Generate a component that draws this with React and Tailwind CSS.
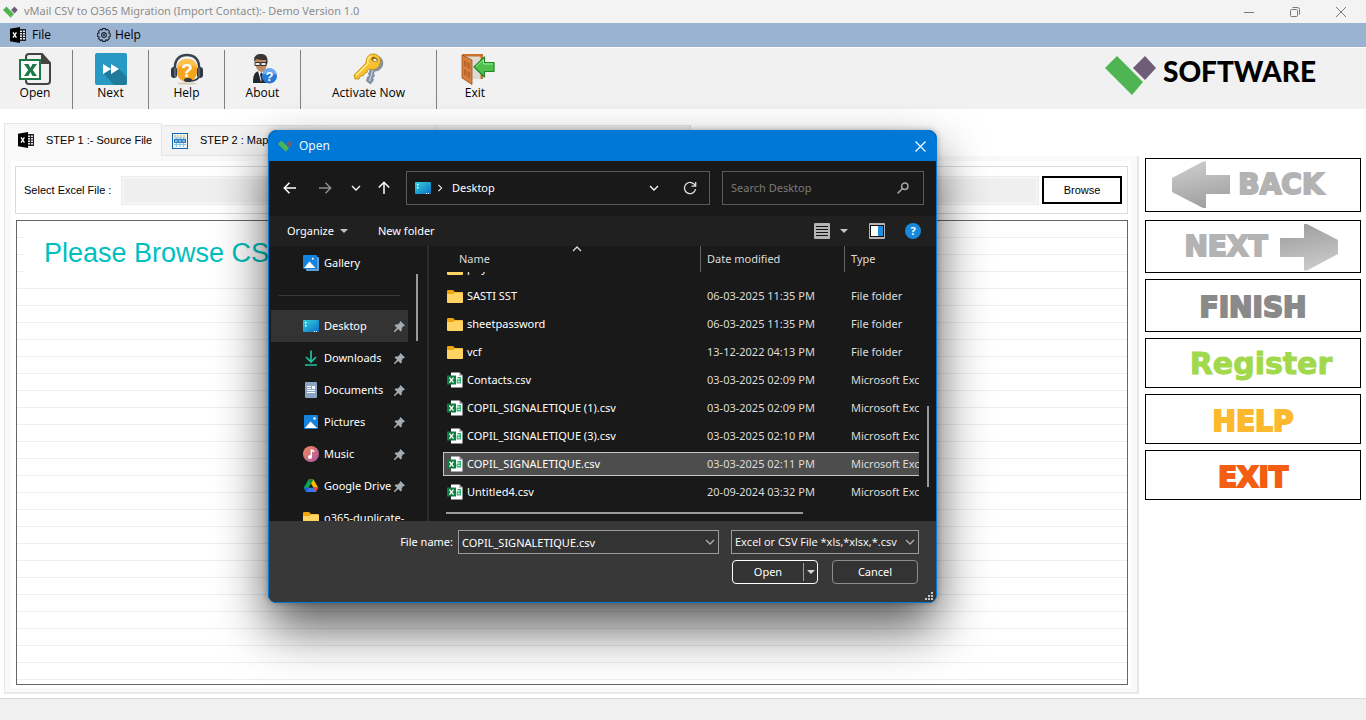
import React, { useState } from 'react';

const Logo = ({ className }) => (
  <svg className={className} viewBox="0 0 52 40" aria-hidden="true">
    <polygon points="12,1 0,13 27,40 38,27" fill="#4fb552" />
    <polygon points="40,1 51,13 40,25 28,13" fill="#6d5d76" />
  </svg>
);

const SheetIcon = ({ className }) => (
  <svg className={className} viewBox="0 0 16 16" aria-hidden="true">
    <rect x="8" y="2" width="8" height="12" fill="#222" />
    <path d="M9 3.5h3v1.6H9zM13 3.5h2v1.6h-2zM9 6.1h3v1.4H9zM13 6.1h2v1.4h-2zM9 8.5h3v1.4H9zM13 8.5h2v1.4h-2zM9 10.9h3v1.6H9zM13 10.9h2v1.6h-2z" fill="#dfe6ee" />
    <path d="M0 1.8 10 0v16L0 14.2z" fill="#000" />
    <path d="M3 5.4l3.4 5.2M6.4 5.4L3 10.6" stroke="#fff" strokeWidth="1.3" />
  </svg>
);

const GearIcon = () => (
  <svg className="size-3.5" viewBox="0 0 14 14" fill="none" stroke="#1d2733" strokeWidth="1.1" aria-hidden="true">
    <path d="M5.600.6h2.800l.5 1.500 1.500-.7 2 2-.7 1.500 1.500.600v2.900l-1.500.6.7 1.500-2 2-1.500-.7-.5 1.600H5.600L5 11.800l-1.500.7-2-2L2.200 9 .6 8.400V5.500L2.200 4.900l-.7-1.500 2-2L5 2.100z" />
    <circle cx="7" cy="7" r="2.400" />
    <circle cx="7" cy="7" r=".5" />
  </svg>
);

const OpenIcon = () => (
  <svg className="size-8" viewBox="0 0 32 32" aria-hidden="true">
    <path d="M10 1h13l8 9v18a3 3 0 0 1-3 3H10a3 3 0 0 1-3-3V4a3 3 0 0 1 3-3z" fill="#f1f1f1" stroke="#45443f" strokeWidth="2" />
    <path d="M22 0l10 11H22z" fill="#45443f" />
    <rect x="1" y="7" width="20" height="19" fill="#fff" stroke="#1b7a46" strokeWidth="2" />
    <path d="M5 11h4.500l2 4 2-4H18l-4.300 6 4.300 6h-4.500l-2-4-2.200 4H5l4.200-6z" fill="#1b7a46" />
  </svg>
);

const NextIcon = () => (
  <svg className="size-8" viewBox="0 0 32 32" aria-hidden="true">
    <rect width="32" height="32" rx="2" fill="#2899c2" />
    <path d="M24 16l8 8v6a2 2 0 0 1-2 2H19L9 21l7-5z" fill="#1f7a9c" />
    <path d="M8 11l8 5-8 5zM16 11l8 5-8 5z" fill="#fff" />
  </svg>
);

const HeadsetIcon = () => (
  <svg className="size-8" viewBox="0 0 32 32" aria-hidden="true">
    <path d="M4 17C3 6 9 2 16 2s13 4 12 15" fill="none" stroke="#39434f" strokeWidth="2.5" />
    <path d="M16 6c6.500 0 10.500 4.500 10.500 11S22 29 16 29 5.500 23.500 5.500 17 9.500 6 16 6z" fill="#f5a51c" />
    <path d="M16 6c6 0 10 4 10.400 9C20 11 12 11 5.600 15 6.200 10 10 6 16 6z" fill="#fbc34b" />
    <ellipse cx="16" cy="30.500" rx="10" ry="1.300" fill="#d9cfc0" />
    <text x="16" y="24" textAnchor="middle" fontSize="19" fill="#fff" className="font-['Liberation_Sans'] font-bold">?</text>
    <rect x="0" y="14" width="6" height="11" rx="3" fill="#2f3946" />
    <rect x="26" y="14" width="6" height="11" rx="3" fill="#2f3946" />
    <path d="M4 15v9M28 15v9" stroke="#7d8ea2" strokeWidth="1" />
    <path d="M28 24c-2 3-5 4-9 4" fill="none" stroke="#2f3946" strokeWidth="1.500" />
    <ellipse cx="17" cy="27" rx="4" ry="2" fill="#2f3946" />
  </svg>
);

const AboutIcon = () => (
  <svg className="size-8" viewBox="0 0 32 32" aria-hidden="true">
    <path d="M6 30c0-7 1-11 6-12h5c4 1 6 5 6 12z" fill="#23272e" />
    <path d="M11 18l3 11 4-11z" fill="#fff" />
    <path d="M14 19l2 2-1 8-2-7z" fill="#2b2f38" />
    <path d="M8 7c0-3 3-4 6-4 4 0 6 2 6 6 0 5-2 10-5 10-4 0-7-4-7-12z" fill="#c08a64" />
    <path d="M7.500 9C6 4 9 1 14 1c5 0 7 3 6.500 9L19 12V7c-3 0-7 0-10-1z" fill="#3b3734" />
    <path d="M8 9.500h5v3H8zM14 9.500h5v3h-5z" fill="#e8eef4" stroke="#222" strokeWidth=".9" />
    <circle cx="22.500" cy="23" r="7.500" fill="#2b78d8" />
    <path d="M15.500 22a7 7 0 0 1 14 0c-4-2.500-10-2.500-14 0z" fill="#6bacf0" />
    <text x="22.500" y="28" textAnchor="middle" fontSize="13" fill="#fff" className="font-['Liberation_Sans'] font-bold">?</text>
  </svg>
);

const KeysIcon = () => (
  <svg className="size-8" viewBox="0 0 32 32" aria-hidden="true">
    <g fill="#8795a8" stroke="#6a788c" strokeWidth=".7">
      <path d="M22 3c6 0 8.500 4 7.500 9-1 4-4 6-8 6l-1 3 1 2-2 2 1 2-3 4-4-3 1-4 2-1-1-2 3-7z" />
    </g>
    <path d="M16.500 28l3.500-12" stroke="#cfd7e2" strokeWidth="1" />
    <path d="M20 1c5.500 0 8.500 4 7 9.500-1.400 4.700-5.500 7-10 5.500l-2.500 1-.5 2.500-2.500.5-1 2.500-3 .5L6 26H2l-1-4L13 10c0-5 2.500-9 7-9z" fill="#f7c22d" stroke="#b8860b" strokeWidth=".8" />
    <path d="M19 3c-3.500.5-5 4-4 7.500L3 22.500" fill="none" stroke="#ffe98b" strokeWidth="1.500" />
    <ellipse cx="21.500" cy="6.500" rx="3.300" ry="2.300" fill="#8b6b14" transform="rotate(25 21.500 6.500)" />
    <ellipse cx="22" cy="7.100" rx="2" ry="1.200" fill="#f1f1f1" transform="rotate(25 22 7)" />
  </svg>
);

const ExitIcon = () => (
  <svg className="h-8 w-10" viewBox="-6 0 40 32" aria-hidden="true">
    <path d="M1 1h21v25H11z" fill="#c9702d" />
    <path d="M4 3.500h15.500V26H11z" fill="#dedbd5" />
    <path d="M1 2l10 5v24.500L1 25z" fill="#d8803f" stroke="#9c5218" strokeWidth=".8" />
    <path d="M3 7l2.500 1.300v6L3 13zM6.500 9L9 10.300v6L6.500 15zM3 16l2.500 1.300v6L3 22zM6.500 18L9 19.300v6L6.500 24z" fill="#b9652a" />
    <path d="M13 14L23.500 4v5.500H33v9h-9.500V24z" fill="#4fc04b" stroke="#1d8a26" strokeWidth="1.200" strokeLinejoin="round" />
    <path d="M15 13.500L22.500 6.500V11H32" fill="none" stroke="#a4e79d" strokeWidth="1" />
  </svg>
);

const MappingIcon = () => (
  <svg className="size-4" viewBox="0 0 16 16" aria-hidden="true">
    <rect x=".5" y=".5" width="15" height="15" fill="#eef6fd" stroke="#1565b0" />
    <path d="M2 3h12" stroke="#e2c46a" strokeWidth="1.500" strokeDasharray="2 1" />
    <path d="M2 5h12M2 11.500h12M4.500 4v10M8 4v10M11.500 4v10" stroke="#7fc1e0" strokeWidth=".9" />
    <rect x="2" y="6.200" width="12" height="3.600" fill="#1768b8" />
    <path d="M3 7.200h2.500v1.600H3zM6.700 7.200h2.600v1.600H6.700zM10.500 7.200H13v1.600h-2.500z" fill="#a8d5f2" />
  </svg>
);

const BigArrow = ({ flipped }) => (
  <svg className={flipped ? 'h-12 w-[58px] rotate-180' : 'h-12 w-[58px]'} viewBox="0 0 58 48" aria-hidden="true">
    <defs>
      <linearGradient id={flipped ? 'arrowNext' : 'arrowBack'} x1="0" y1="0" x2=".25" y2="1">
        <stop offset="0" stopColor="#cfcfcf" />
        <stop offset="1" stopColor="#a3a3a3" />
      </linearGradient>
    </defs>
    <path d="M0 17L31 .5H34V14h24v19H34v14h-3L0 31z" fill={flipped ? 'url(#arrowNext)' : 'url(#arrowBack)'} />
  </svg>
);

const DesktopIcon = () => (
  <svg className="h-3 w-4 shrink-0" viewBox="0 0 16 12" aria-hidden="true">
    <defs>
      <linearGradient id="desk" x1="0" y1="0" x2="1" y2="1">
        <stop offset="0" stopColor="#36d1e0" />
        <stop offset="1" stopColor="#0a6fc4" />
      </linearGradient>
    </defs>
    <rect width="16" height="12" rx="1" fill="url(#desk)" />
    <path d="M2 2h1.500v1.500H2zM2 5h1.500v1.500H2zM11 11h1v1h-1zM13 11h1v1h-1z" fill="#fff" />
  </svg>
);

const FolderIcon = () => (
  <svg className="h-[13px] w-4 shrink-0" viewBox="0 0 16 13" aria-hidden="true">
    <path d="M0 1.200A1.200 1.200 0 0 1 1.200 0H6l2 2h6.800A1.200 1.200 0 0 1 16 3.200V6H0z" fill="#f0a30a" />
    <path d="M0 4h6l2-1.500h7a1 1 0 0 1 1 1V12a1 1 0 0 1-1 1H1a1 1 0 0 1-1-1z" fill="#ffd463" />
  </svg>
);

const CsvIcon = () => (
  <svg className="size-4 shrink-0" viewBox="0 0 16 16" aria-hidden="true">
    <path d="M4 .5h8.500L15.500 3.500V15.500H4z" fill="#fff" />
    <path d="M12.500.5l3 3h-3z" fill="#7d7d7d" />
    <path d="M10.300 5.800h3v5h-3V8.200h3" fill="none" stroke="#33b878" strokeWidth="1.400" />
    <rect y="3.500" width="9" height="9" rx=".6" fill="#107c41" />
    <path d="M2.500 5.600l4 5M6.500 5.600l-4 5" stroke="#fff" strokeWidth="1.400" />
  </svg>
);

const GalleryIcon = () => (
  <svg className="size-4 shrink-0" viewBox="0 0 16 16" aria-hidden="true">
    <path d="M14 2h1a1 1 0 0 1 1 1v12a1 1 0 0 1-1 1H4a1 1 0 0 1-1-1v-1h11z" fill="#5f9fd8" />
    <rect width="14" height="14" rx="1" fill="#1583dc" />
    <path d="M1 13l5.500-6.500L12.500 13z" fill="#fff" />
    <circle cx="9.800" cy="3.800" r="1" fill="#fff" />
  </svg>
);

const DownloadIcon = () => (
  <svg className="size-4 shrink-0" viewBox="0 0 16 16" fill="none" stroke="#21c29a" strokeWidth="1.700" aria-hidden="true">
    <path d="M8 .5v11M3 7l5 5 5-5M2 15h12" />
  </svg>
);

const DocumentIcon = () => (
  <svg className="size-4 shrink-0" viewBox="0 0 16 16" aria-hidden="true">
    <rect x="2" width="12" height="16" rx="1" fill="#8aa5c4" />
    <path d="M4 4.500h4M4 6.500h4M4 8.500h8M4 10.500h8" stroke="#fff" strokeWidth="1" />
    <rect x="9" y="4" width="3" height="3" fill="#fff" />
  </svg>
);

const PicturesIcon = () => (
  <svg className="size-4 shrink-0" viewBox="0 0 16 16" aria-hidden="true">
    <rect x="1" y="1" width="14" height="14" rx="1" fill="#1583dc" />
    <path d="M2 14l5.500-6.500L14 14z" fill="#fff" />
    <circle cx="11.500" cy="4.500" r="1.200" fill="#fff" />
  </svg>
);

const MusicIcon = () => (
  <svg className="size-4 shrink-0" viewBox="0 0 16 16" aria-hidden="true">
    <defs>
      <linearGradient id="music" x1="0" y1="0" x2="1" y2="1">
        <stop offset="0" stopColor="#f58b55" />
        <stop offset="1" stopColor="#a855a8" />
      </linearGradient>
    </defs>
    <circle cx="8" cy="8" r="8" fill="url(#music)" />
    <path d="M8.300 3.500v7.300M8.300 4l3 1.500" stroke="#fff" strokeWidth="1.400" />
    <circle cx="7" cy="11" r="2" fill="#fff" />
  </svg>
);

const DriveIcon = () => (
  <svg className="size-4 shrink-0" viewBox="0 0 16 16" aria-hidden="true">
    <path d="M5.500 1.500L.8 9.800l2.300 4.200 3.200-5.500L8 5.800z" fill="#0aa45a" />
    <path d="M5.500 1.500h5l4.700 8.300h-4.600L8 5.600z" fill="#ffba00" />
    <path d="M5.500 1.500h5L8 5.800z" fill="#0b8043" />
    <path d="M3.100 14l2.400-4.200h9.700L12.900 14z" fill="#3b78f0" />
    <path d="M15.200 9.800h-4.600l2.300 4.200z" fill="#ea4335" />
    <path d="M5.500 9.800H.8L3.100 14z" fill="#1a5fd0" />
  </svg>
);

const PinIcon = () => (
  <svg className="size-[11px] shrink-0" viewBox="0 0 11 11" aria-hidden="true">
    <path d="M6.500 0L11 4.500l-1.200.8-.8 0-1.300 2.200v2.300l-1 .7L4.200 8 .9 11H0v-.9L3 6.800.6 4.400l.7-1h2.300L5.700 2V1z" fill="#a3adb5" />
  </svg>
);

const Chevron = ({ className = 'size-2.5' }) => (
  <svg className={className} viewBox="0 0 10 10" fill="none" stroke="currentColor" strokeWidth="1.300" aria-hidden="true">
    <path d="M1 3l4 4 4-4" />
  </svg>
);

const ArrowIcon = ({ className }) => (
  <svg className={className} viewBox="0 0 14 14" fill="none" stroke="currentColor" strokeWidth="1.500" aria-hidden="true">
    <path d="M13 7H1.500M6.500 1.800L1.300 7l5.200 5.200" />
  </svg>
);

const toolbar = [
  { label: 'Open', icon: <OpenIcon />, cls: 'w-[73px] border-r pr-0.5' },
  { label: 'Next', icon: <NextIcon />, cls: 'w-[76px] border-r' },
  { label: 'Help', icon: <HeadsetIcon />, cls: 'w-[76px] border-r' },
  { label: 'About', icon: <AboutIcon />, cls: 'w-[76px] border-r' },
  { label: 'Activate Now', icon: <KeysIcon />, cls: 'w-[136px] border-r' },
  { label: 'Exit', icon: <ExitIcon />, cls: 'w-[76px]' },
];

const places = [
  { label: 'Desktop', icon: <DesktopIcon />, active: true },
  { label: 'Downloads', icon: <DownloadIcon /> },
  { label: 'Documents', icon: <DocumentIcon /> },
  { label: 'Pictures', icon: <PicturesIcon /> },
  { label: 'Music', icon: <MusicIcon /> },
  { label: 'Google Drive', icon: <DriveIcon /> },
  { label: 'o365-duplicate-', icon: <FolderIcon />, unpinned: true },
];

const files = [
  { name: 'priyanka', date: '04-10-2023 10:40 PM', folder: true },
  { name: 'SASTI SST', date: '06-03-2025 11:35 PM', folder: true },
  { name: 'sheetpassword', date: '06-03-2025 11:35 PM', folder: true },
  { name: 'vcf', date: '13-12-2022 04:13 PM', folder: true },
  { name: 'Contacts.csv', date: '03-03-2025 02:09 PM' },
  { name: 'COPIL_SIGNALETIQUE (1).csv', date: '03-03-2025 02:09 PM' },
  { name: 'COPIL_SIGNALETIQUE (3).csv', date: '03-03-2025 02:10 PM' },
  { name: 'COPIL_SIGNALETIQUE.csv', date: '03-03-2025 02:11 PM' },
  { name: 'Untitled4.csv', date: '20-09-2024 03:32 PM' },
];

const sideButton = "flex items-center justify-center border border-black bg-white font-['DejaVu_Sans',sans-serif] leading-8 font-bold";

function SideButtons() {
  return (
    <div className="mt-[49px] mr-[5px] ml-1.5 flex w-[216px] shrink-0 flex-col gap-1.5">
      <button type="button" className={`${sideButton} mb-0.5 h-[54px] gap-2 pr-2.5 text-[28px] text-[#b3b3b3] [-webkit-text-stroke:2px]`}><BigArrow />BACK</button>
      <button type="button" className={`${sideButton} h-[53px] gap-3 pl-4 text-[28px] text-[#b3b3b3] [-webkit-text-stroke:2px]`}>NEXT<BigArrow flipped /></button>
      <button type="button" className={`${sideButton} h-[53px] pt-1 text-[28px] text-[#8a8a8a] [-webkit-text-stroke:2px]`}>FINISH</button>
      <button type="button" className={`${sideButton} h-[50px] pt-0.5 pl-4 text-[30px] text-[#a2d94c] [-webkit-text-stroke:1px]`}>Register</button>
      <button type="button" className={`${sideButton} h-[50px] pt-1.5 text-[28px] text-[#fdb92e] [-webkit-text-stroke:2px]`}>HELP</button>
      <button type="button" className={`${sideButton} h-[50px] pt-1.5 text-[28px] text-[#f45e12] [-webkit-text-stroke:2px]`}>EXIT</button>
    </div>
  );
}

function SourceTab() {
  return (
    <section className="flex min-w-0 flex-1 flex-col pt-3.5 pl-1 font-['Liberation_Sans',Arial,sans-serif] text-[11px]">
      <div role="tablist" className="flex items-end">
        <button type="button" role="tab" aria-selected="true" className="flex h-[33px] w-[158px] items-center gap-3 border border-b-0 border-[#e5e5e5] bg-[#f9f9f9] pl-[13px]">
          <SheetIcon className="size-4" />STEP 1 :- Source File
        </button>
        <button type="button" role="tab" aria-selected="false" className="flex h-[31px] w-[137px] items-center gap-3 border border-l-0 border-[#e5e5e5] bg-[#f3f3f3] pl-2.5 whitespace-nowrap">
          <MappingIcon />STEP 2 : Mapping
        </button>
        <div className="h-[31px] w-[138px] border border-l-0 border-[#e5e5e5] bg-[#f3f3f3]" />
        <div className="h-[31px] w-[254px] border border-l-0 border-[#e5e5e5] bg-[#f3f3f3]" />
      </div>

      <div className="mb-1 flex flex-1 flex-col border-r-2 border-b-2 border-l border-[#e8e8e8] bg-[#f9f9f9] px-1.5 pt-[5px] pb-1">
        <div className="flex flex-1 flex-col bg-white pt-[5px] pr-[3px] pb-[3px] pl-1">
          <div className="flex h-12 items-center border border-[#dcdcdc] pr-[5px] pl-2">
            <label htmlFor="excel" className="w-[98px]">Select Excel File :</label>
            <input id="excel" readOnly className="h-[27px] min-w-0 flex-1 border-2 border-[#f5f5f5] bg-[#efefef] outline outline-[#ececec]" />
            <button type="button" className="ml-1 h-7 w-20 border-2 border-black bg-white">Browse</button>
          </div>
          <div className="mt-1.5 ml-px flex-1 border border-[#666] bg-[repeating-linear-gradient(to_bottom,#fff_0px,#fff_16px,#eee_16px,#eee_17px)] pt-2 pl-[7px]">
            <h1 className="w-[500px] bg-white pt-[5px] pb-1 pl-5 text-[27px] leading-[38px] whitespace-nowrap text-[#00bfbf]">Please Browse CSV</h1>
          </div>
        </div>
      </div>
    </section>
  );
}

function Sidebar() {
  return (
    <nav className="flex w-[160px] overflow-hidden border-r-2 border-[#2b2b2b]">
      <div className="w-[139px] shrink-0 pt-px pl-0.5">
        <a href="#gallery" className="flex h-8 items-center gap-[5px] pl-8"><GalleryIcon />Gallery</a>
        <hr className="mt-4 mb-3.5 ml-2 w-[121px] border-[#3b3b3b]" />
        {places.map((place) => (
          <a
            key={place.label}
            href={`#${place.label}`}
            className={`flex h-8 items-center gap-[5px] pr-[3px] pl-8 whitespace-nowrap ${place.active ? 'bg-[#333]' : ''}`}
          >
            {place.icon}
            <span className="min-w-0 flex-1">{place.label}</span>
            {!place.unpinned && <PinIcon />}
          </a>
        ))}
      </div>
      <div className="mt-7 ml-2 h-[67px] w-0.5 bg-[#9a9a9a]" />
    </nav>
  );
}

function FileList({ selected, onSelect }) {
  return (
    <div className="flex min-w-0 flex-1 pl-3.5">
      <div className="flex w-[476px] flex-col">
        <table className="block w-full text-left">
          <thead className="block text-[#dcdcdc]">
            <tr className="flex h-[26px] items-center">
              <th className="relative w-[257px] pl-4 font-normal">
                Name
                <Chevron className="absolute top-[-7px] left-[129px] size-2.5 rotate-180" />
              </th>
              <th className="h-[26px] w-[144px] border-l border-[#636363] pl-1.5 leading-[26px] font-normal">Date modified</th>
              <th className="h-[26px] flex-1 border-l border-[#636363] pl-1.5 leading-[26px] font-normal">Type</th>
            </tr>
          </thead>
          <tbody className="block h-60 overflow-hidden">
            {files.map((file) => (
              <tr
                key={file.name}
                onClick={() => onSelect(file.name)}
                className={`mb-1 flex h-6 items-center overflow-hidden border border-r-0 whitespace-nowrap first:-mt-4 ${file.name === selected ? 'border-[#c8c8c8] bg-[#4d4d4d]' : 'border-transparent'}`}
              >
                <td className="flex w-[263px] shrink-0 items-center gap-1 pl-[3px]">
                  {file.folder ? <FolderIcon /> : <CsvIcon />}
                  {file.name}
                </td>
                <td className="w-[144px] shrink-0 text-[#dcdcdc]">{file.date}</td>
                <td className="text-[#dcdcdc]">{file.folder ? 'File folder' : 'Microsoft Excel'}</td>
              </tr>
            ))}
          </tbody>
        </table>
        <div className="ml-[3px] h-0.5 w-[357px] bg-[#9a9a9a]" />
      </div>
      <div className="mt-40 ml-2 h-[81px] w-0.5 bg-[#9a9a9a]" />
    </div>
  );
}

function OpenDialog() {
  const [selected, setSelected] = useState('COPIL_SIGNALETIQUE.csv');

  return (
    <div
      role="dialog"
      aria-label="Open"
      className="absolute top-[130px] left-[268px] w-[669px] overflow-hidden rounded-lg border border-[#0078d7] bg-[#191919] font-['Noto_Sans','Open_Sans',sans-serif] text-[11px] text-white shadow-[0_25px_50px_rgba(0,0,0,0.65),0_0_6px_rgba(0,0,0,0.3)]"
    >
      <header className="flex h-[30px] items-center bg-[#0078d7] pr-2.5 pl-[9px] font-['Open_Sans',sans-serif] text-[12px]">
        <Logo className="mr-1.5 h-3 w-[15px]" />
        <h2 className="flex-1">Open</h2>
        <button type="button" aria-label="Close">
          <svg className="size-[11px]" viewBox="0 0 11 11" stroke="#fff" strokeWidth="1.200"><path d="M.5.5l10 10M10.500.5l-10 10" /></svg>
        </button>
      </header>

      <div className="flex h-[55px] items-center pr-3 pb-px pl-3.5">
        <button type="button" aria-label="Back"><ArrowIcon className="size-3.5" /></button>
        <button type="button" aria-label="Forward" className="ml-[21px] text-[#8c8c8c]"><ArrowIcon className="size-3.5 rotate-180" /></button>
        <button type="button" aria-label="Recent locations" className="ml-[19px]"><Chevron /></button>
        <button type="button" aria-label="Up" className="ml-4"><ArrowIcon className="size-3.5 rotate-90" /></button>
        <div className="ml-[15px] flex h-[34px] w-[304px] items-center border border-[#5a5a5a] pr-3 pl-2">
          <DesktopIcon />
          <Chevron className="ml-[5px] size-2 -rotate-90" />
          <span className="ml-2 flex-1">Desktop</span>
          <button type="button" aria-label="Previous locations" className="mr-6"><Chevron /></button>
          <button type="button" aria-label="Refresh">
            <svg className="size-3.5" viewBox="0 0 14 14" fill="none" stroke="#ddd" strokeWidth="1.300"><path d="M12.300 5A5.600 5.600 0 1 0 12.600 8M12.700 1v4.200H8.500" /></svg>
          </button>
        </div>
        <label className="ml-3 flex h-[34px] flex-1 items-center border border-[#5a5a5a] pr-3.5 pl-2">
          <input aria-label="Search Desktop" placeholder="Search Desktop" className="min-w-0 flex-1 bg-transparent outline-none placeholder:text-[#7b7b7b]" />
          <svg className="size-3" viewBox="0 0 12 12" fill="none" stroke="#a5a5a5" strokeWidth="1.500"><circle cx="7.800" cy="4.200" r="3.200" /><path d="M5.300 6.700L.6 11.400" /></svg>
        </label>
      </div>

      <div className="flex h-[30px] items-center bg-[#202020] pr-[15px] pl-[18px]">
        <button type="button" className="flex w-[91px] items-center gap-1.5">
          Organize
          <svg className="h-1 w-2" viewBox="0 0 8 4"><path d="M0 0h8L4 4z" fill="#c4c4c4" /></svg>
        </button>
        <button type="button" className="flex-1 text-left">New folder</button>
        <button type="button" aria-label="Change view" className="flex items-center gap-2.5">
          <svg className="size-4" viewBox="0 0 16 16"><rect width="16" height="16" rx="1" fill="#b4b4b4" /><path d="M2 3.500h12M2 6.500h12M2 9.500h12M2 12.500h12" stroke="#111" strokeWidth="1" /></svg>
          <svg className="h-1 w-2" viewBox="0 0 8 4"><path d="M0 0h8L4 4z" fill="#c4c4c4" /></svg>
        </button>
        <button type="button" aria-label="Preview pane" className="ml-[21px]">
          <svg className="size-4" viewBox="0 0 16 16"><rect width="16" height="16" rx="1" fill="#b4b4b4" /><rect x="1" y="2" width="14" height="12" fill="#111" /><rect x="2" y="3" width="7" height="10" fill="#fff" /><rect x="9" y="3" width="5" height="10" fill="#1d8fe0" /></svg>
        </button>
        <button type="button" aria-label="Help" className="ml-5 flex size-4 items-center justify-center rounded-full bg-[#1888dd] font-bold">?</button>
      </div>

      <div className="flex h-[275px]">
        <Sidebar />
        <FileList selected={selected} onSelect={setSelected} />
      </div>

      <footer className="relative h-[81px] bg-[#383838] pt-[9px] pr-[17px]">
        <div className="flex h-6 items-center justify-end">
          <label htmlFor="filename" className="mr-[5px]">File name:</label>
          <div className="relative mr-3 w-[261px]">
            <input
              id="filename"
              value={selected}
              onChange={(e) => setSelected(e.target.value)}
              className="block h-6 w-full border border-[#9b9b9b] bg-[#333] pr-5 pl-[3px] outline-none"
            />
            <Chevron className="absolute top-[7px] right-1 size-2.5 text-[#b0b0b0]" />
          </div>
          <div className="relative w-[188px]">
            <select aria-label="File type" className="block h-6 w-full appearance-none border border-[#9b9b9b] bg-[#333] pl-[3px] font-['Open_Sans',sans-serif]">
              <option>Excel or CSV File *xls,*xlsx,*.csv</option>
            </select>
            <Chevron className="absolute top-[7px] right-1 size-2.5 text-[#b0b0b0]" />
          </div>
        </div>
        <div className="mt-1.5 mr-px flex justify-end gap-3.5">
          <div className="flex h-6 w-[86px] items-center rounded border border-white bg-[#333]">
            <button type="button" className="flex-1">Open</button>
            <button type="button" aria-label="Open options" className="flex h-[18px] w-3.5 items-center justify-center border-l border-[#9b9b9b]">
              <svg className="h-1 w-2" viewBox="0 0 8 4"><path d="M0 0h8L4 4z" fill="#d4d4d4" /></svg>
            </button>
          </div>
          <button type="button" className="h-6 w-[86px] rounded border border-[#8c8c8c] bg-[#333]">Cancel</button>
        </div>
        <svg className="absolute right-[3px] bottom-0.5 size-2" viewBox="0 0 8 8" fill="#c8c8c8" aria-hidden="true">
          <path d="M6 0h2v2H6zM3 3h2v2H3zM6 3h2v2H6zM0 6h2v2H0zM3 6h2v2H3zM6 6h2v2H6z" />
        </svg>
      </footer>
    </div>
  );
}

export default function App() {
  return (
    <div className="relative flex min-h-screen flex-col bg-white font-['Open_Sans','Noto_Sans',sans-serif] text-black">
      <header className="flex h-[23px] items-center bg-[#f3f3f3] pl-[3px] text-[#8b8b8b]">
        <Logo className="mr-1.5 h-3 w-[15px]" />
        <span className="flex-1 font-['Noto_Sans',sans-serif] text-[11px]">vMail CSV to O365 Migration (Import Contact):- Demo Version 1.0</span>
        <div className="flex items-center gap-9 pr-5">
          <button type="button" aria-label="Minimize"><svg className="size-2.5" viewBox="0 0 10 10" stroke="#777"><path d="M0 5.500h10" /></svg></button>
          <button type="button" aria-label="Restore"><svg className="size-2.5" viewBox="0 0 10 10" fill="none" stroke="#777"><rect x=".5" y="2.500" width="7" height="7" rx="1" /><path d="M2.500.5h5a2 2 0 0 1 2 2v5" /></svg></button>
          <button type="button" aria-label="Close"><svg className="size-2.5" viewBox="0 0 10 10" stroke="#777"><path d="M0 0l10 10M10 0L0 10" /></svg></button>
        </div>
      </header>

      <nav className="flex h-6 items-center bg-[#99b3d1] pl-2.5 text-[12px]">
        <button type="button" className="flex w-[87px] items-center gap-1.5"><SheetIcon className="size-4" />File</button>
        <button type="button" className="flex items-center gap-1"><GearIcon />Help</button>
      </nav>

      <div className="mt-px flex h-[61px] justify-between bg-[#f1f1f1]">
        <div className="flex pt-0.5 text-[12px]">
          {toolbar.map((item) => (
            <button key={item.label} type="button" className={`flex flex-col items-center border-[#808080] pt-[3px] leading-4 ${item.cls}`}>
              {item.icon}
              {item.label}
            </button>
          ))}
        </div>
        <div className="mr-[50px] flex items-start pt-[7px]">
          <Logo className="h-10 w-[52px]" />
          <span className="ml-1.5 font-['Lato',sans-serif] text-[28px] leading-8 font-black">SOFTWARE</span>
        </div>
      </div>

      <main className="flex flex-1">
        <SourceTab />
        <SideButtons />
      </main>

      <footer className="h-[22px] border-t border-[#d9d9d9] bg-[#f0f0f0]" />

      <OpenDialog />
    </div>
  );
}
